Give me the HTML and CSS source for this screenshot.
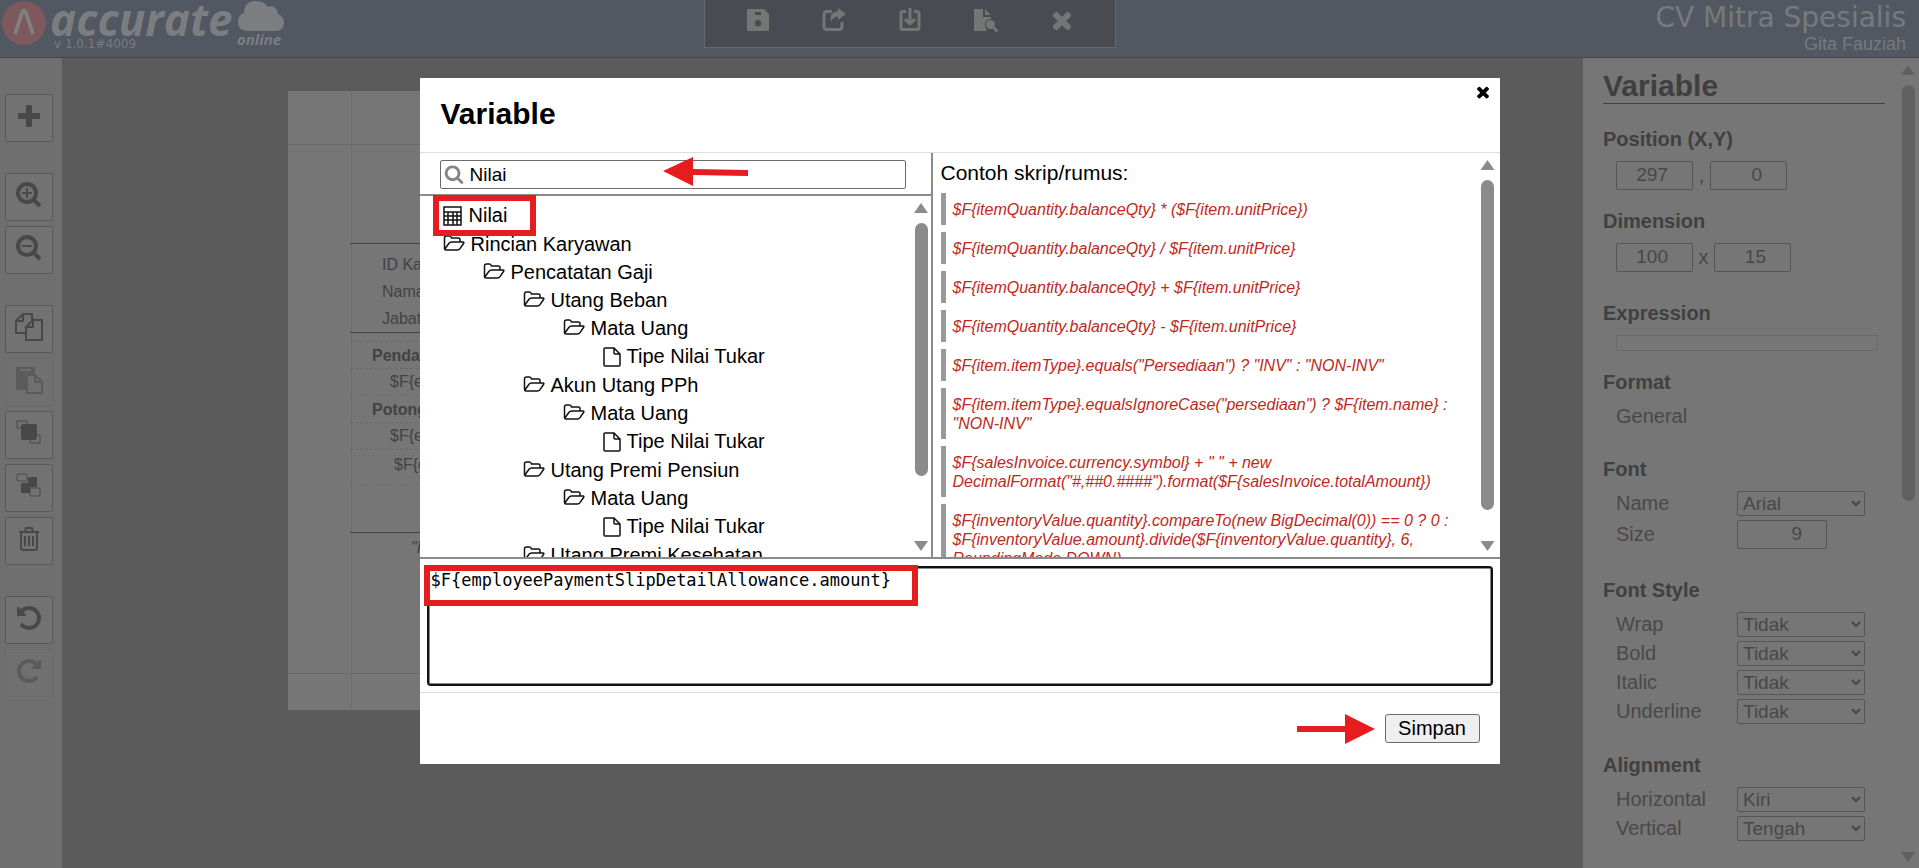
FILE: index.html
```html
<!DOCTYPE html>
<html lang="id">
<head>
    <meta charset="UTF-8">
    <meta name="viewport" content="width=device-width, initial-scale=1.0">
    <title>Variable - Accurate Online</title>
    <link rel="stylesheet" href="styles.css">
</head>
<body>
    <!-- Shared icons -->
    <svg class="icon-defs" aria-hidden="true">
        <symbol id="folder" viewBox="0 0 22 18">
            <path d="M1.500 14V3Q1.500 1 3.500 1H6.500Q8 1 8.500 3H15.500Q17 3 17 5V7M1.500 14.500L6 8.300Q7 7 8.500 7H20Q21.500 7 20.500 8.500L17 13.600Q16 15 14.500 15H3Q1.500 15 1.500 13.500"/>
        </symbol>
        <symbol id="file" viewBox="0 0 18 20">
            <path d="M11 1H2Q1 1 1 2V18Q1 19 2 19H16Q17 19 17 18V7ZM11 1V6Q11 7 12 7H17"/>
        </symbol>
        <symbol id="times" viewBox="0 0 1792 1792">
            <path d="M1490 1322q0 40-28 68l-136 136q-28 28-68 28t-68-28l-294-294-294 294q-28 28-68 28t-68-28l-136-136q-28-28-28-68t28-68l294-294-294-294q-28-28-28-68t28-68l136-136q28-28 68-28t68 28l294 294 294-294q28-28 68-28t68 28l136 136q28 28 28 68t-28 68l-294 294 294 294q28 28 28 68z"/>
        </symbol>
        <symbol id="undo" viewBox="0 0 1792 1792">
            <path d="M1664 896q0 156-61 298t-164 245-245 164-298 61q-172 0-327-72.500t-264-204.500q-7-10-6.500-22.500t8.500-20.500l137-138q10-9 25-9 16 2 23 12 73 95 179 147t225 52q104 0 198.500-40.500t163.500-109.500 109.500-163.500 40.500-198.500-40.500-198.500-109.500-163.500-163.500-109.500-198.500-40.500q-98 0-188 35.500t-160 101.500l137 138q31 30 14 69-17 40-59 40h-448q-26 0-45-19t-19-45v-448q0-42 40-59 39-17 69 14l130 129q107-101 244.500-156.500t284.500-55.500q156 0 298 61t245 164 164 245 61 298z"/>
        </symbol>
        <symbol id="search" viewBox="0 0 1792 1792">
            <path d="M1216 832q0-185-131.500-316.500t-316.500-131.500-316.500 131.500-131.500 316.500 131.500 316.500 316.500 131.500 316.500-131.500 131.500-316.500zm512 832q0 52-38 90t-90 38q-54 0-90-38l-343-342q-179 124-399 124-143 0-273.500-55.500t-225-150-150-225-55.500-273.500 55.500-273.500 150-225 225-150 273.500-55.500 273.500 55.500 225 150 150 225 55.500 273.500q0 220-124 399l343 343q37 37 37 90z"/>
        </symbol>
    </svg>

    <header class="topbar">
        <svg class="logo" width="290" height="57" viewBox="0 0 290 57" role="img" aria-label="Accurate Online">
            <circle class="logo-disc" cx="24" cy="23" r="22"/>
            <path class="logo-mark" d="M15 34L21 16Q24 5 27 16L33 34"/>
            <text class="logo-name" x="50" y="36">accurate</text>
            <path class="logo-cloud" d="M248 31Q238 31 238 22Q238 15 244 13Q244 1 256 1Q264 1 268 7Q276 4 278 14Q284 16 284 23Q284 31 275 31Z"/>
            <text class="logo-sub" x="237" y="45">online</text>
            <text class="logo-version" x="54" y="48">v 1.0.1#4009</text>
        </svg>

        <nav class="actions">
            <button type="button" aria-label="Simpan">
                <svg width="24" height="24" viewBox="0 0 24 24"><path fill-rule="evenodd" d="M1 1H18L23 6V23H1ZM9 4V7H15V4ZM12 12A3.200 3.200 0 1 0 12 18.400A3.200 3.200 0 1 0 12 12"/></svg>
            </button>
            <button type="button" aria-label="Bagikan">
                <svg width="24" height="24" viewBox="0 0 24 24"><path class="line" d="M10 3.500H5Q2 3.500 2 6.500V18.500Q2 21.500 5 21.500H17Q20 21.500 20 18.500V14"/><path d="M16 0L24 6L16 12V8.500Q11 8.500 9 14Q7 4 16 3.500Z"/></svg>
            </button>
            <button type="button" aria-label="Unduh">
                <svg width="24" height="24" viewBox="0 0 24 24"><path class="line" d="M8 3.500H5Q3 3.500 3 5.500V19.500Q3 21.500 5 21.500H19Q21 21.500 21 19.500V5.500Q21 3.500 19 3.500H16M12 0V15M7 11L12 16L17 11"/></svg>
            </button>
            <button type="button" aria-label="Pratinjau">
                <svg width="26" height="24" viewBox="0 0 26 24"><path d="M1 1H10V9H18V11Q12 11 12 17Q12 20 14 23H1ZM12 1L18 7H12Z"/><path class="line" d="M20.500 19.500L24.500 23.500"/><circle cx="17.500" cy="16.500" r="4.500"/></svg>
            </button>
            <button type="button" aria-label="Tutup">
                <svg width="28" height="28"><use href="#times"/></svg>
            </button>
        </nav>

        <div class="account">
            <div class="company">CV Mitra Spesialis</div>
            <div class="user">Gita Fauziah</div>
        </div>
    </header>

    <main class="workspace">
        <aside class="tools">
            <div class="tool-group">
                <button type="button" aria-label="Tambah">
                    <svg width="24" height="24" viewBox="0 0 24 24"><path d="M9 2Q9 1 10 1H14Q15 1 15 2V9H22Q23 9 23 10V14Q23 15 22 15H15V22Q15 23 14 23H10Q9 23 9 22V15H2Q1 15 1 14V10Q1 9 2 9H9Z"/></svg>
                </button>
            </div>
            <div class="tool-group">
                <button type="button" aria-label="Perbesar">
                    <svg width="28" height="28" viewBox="0 0 28 28"><circle class="line" cx="12" cy="12" r="9"/><path class="line" d="M19 19L25 25"/><path class="line thin" d="M7 12H17M12 7V17"/></svg>
                </button>
                <button type="button" aria-label="Perkecil">
                    <svg width="28" height="28" viewBox="0 0 28 28"><circle class="line" cx="12" cy="12" r="9"/><path class="line" d="M19 19L25 25"/><path class="line thin" d="M7 12H17"/></svg>
                </button>
            </div>
            <div class="tool-group">
                <button type="button" aria-label="Salin">
                    <svg width="28" height="28" viewBox="0 0 28 28"><path class="line thin" d="M11 20H1V8L8 1H17V7M8 1V8H1M17 7H27V27H11V14L18 7V14H11"/></svg>
                </button>
                <button type="button" aria-label="Tempel" disabled>
                    <svg width="28" height="28" viewBox="0 0 28 28"><path fill-rule="evenodd" d="M1 1H20V8H11V24H1ZM5 3V5H16V3Z"/><path class="line thin" d="M12 9H20L27 16V27H12ZM20 9V16H27"/></svg>
                </button>
                <button type="button" aria-label="Ke depan">
                    <svg width="28" height="28" viewBox="0 0 28 28"><path class="line hair" d="M6 9H2V2H12V5M22 16H25V24H15V21"/><rect x="6" y="5" width="16" height="16" rx="2"/></svg>
                </button>
                <button type="button" aria-label="Ke belakang">
                    <svg width="28" height="28" viewBox="0 0 28 28"><path d="M13 5H22V15H15V21H6V11H13Z"/><rect class="line hair" x="2" y="2" width="10" height="7" rx="1"/><rect class="line hair" x="15" y="16" width="10" height="8" rx="1"/></svg>
                </button>
                <button type="button" aria-label="Hapus">
                    <svg width="24" height="24" viewBox="0 0 24 24"><path class="line thin" d="M2 5H22M4 5V21Q4 23 6 23H18Q20 23 20 21V5M8 5L9 1H15L16 5M8 9V19M12 9V19M16 9V19"/></svg>
                </button>
            </div>
            <div class="tool-group">
                <button type="button" aria-label="Urungkan">
                    <svg width="28" height="28"><use href="#undo"/></svg>
                </button>
                <button type="button" aria-label="Ulangi" disabled>
                    <svg class="flip" width="28" height="28"><use href="#undo"/></svg>
                </button>
            </div>
        </aside>

        <section class="canvas">
            <div class="paper">
                <div class="paper-margin"></div>
                <div class="report">
                    <div class="band band-header"></div>
                    <div class="band band-info">
                        <p>ID Karyawan</p>
                        <p>Nama</p>
                        <p>Jabatan</p>
                    </div>
                    <div class="band band-gap"></div>
                    <div class="band band-title">Pendapatan</div>
                    <div class="band band-field">$F{employeePayment}</div>
                    <div class="band band-title">Potongan</div>
                    <div class="band band-field">$F{employeePayment}</div>
                    <div class="band band-total">$F{employeePayment}</div>
                    <div class="band band-space"></div>
                    <div class="band-note">"Pembayaran gaji"</div>
                </div>
                <div class="paper-margin paper-bottom"></div>
            </div>
        </section>

        <aside class="properties">
            <form class="fields">
                <h2>Variable</h2>

                <h3>Position (X,Y)</h3>
                <div class="pair">
                    <input type="text" value="297" aria-label="Position X">
                    <span class="comma">,</span>
                    <input type="text" value="0" aria-label="Position Y">
                </div>

                <h3 class="near">Dimension</h3>
                <div class="pair">
                    <input type="text" value="100" aria-label="Width">
                    <span class="cross">x</span>
                    <input type="text" value="15" aria-label="Height">
                </div>

                <h3>Expression</h3>
                <div class="expression"></div>

                <h3 class="near">Format</h3>
                <div class="format">General</div>

                <h3>Font</h3>
                <div class="row">
                    <label for="fontName">Name</label>
                    <select id="fontName"><option>Arial</option></select>
                </div>
                <div class="row">
                    <label for="fontSize">Size</label>
                    <input type="text" id="fontSize" value="9">
                </div>

                <h3>Font Style</h3>
                <div class="row">
                    <label for="wrap">Wrap</label>
                    <select id="wrap"><option>Tidak</option></select>
                </div>
                <div class="row">
                    <label for="bold">Bold</label>
                    <select id="bold"><option>Tidak</option></select>
                </div>
                <div class="row">
                    <label for="italic">Italic</label>
                    <select id="italic"><option>Tidak</option></select>
                </div>
                <div class="row">
                    <label for="underline">Underline</label>
                    <select id="underline"><option>Tidak</option></select>
                </div>

                <h3>Alignment</h3>
                <div class="row">
                    <label for="horizontal">Horizontal</label>
                    <select id="horizontal"><option>Kiri</option></select>
                </div>
                <div class="row">
                    <label for="vertical">Vertical</label>
                    <select id="vertical"><option>Tengah</option></select>
                </div>
            </form>
            <div class="scrollbar">
                <span class="arrow-up"></span>
                <div class="track"><div class="thumb thumb-panel"></div></div>
                <span class="arrow-down"></span>
            </div>
        </aside>
    </main>

    <div class="overlay">
        <div class="modal" role="dialog" aria-labelledby="modalTitle">
            <div class="modal-header">
                <h1 id="modalTitle">Variable</h1>
                <button type="button" class="close" aria-label="Tutup">
                    <svg width="18" height="18"><use href="#times"/></svg>
                </button>
            </div>

            <div class="modal-body">
                <div class="variables">
                    <div class="search">
                        <svg class="search-icon" width="20" height="20"><use href="#search"/></svg>
                        <input type="text" value="Nilai" aria-label="Cari variabel">
                    </div>
                    <div class="scroll-area">
                        <ul class="tree">
                            <li>
                                <div class="node leaf">
                                    <svg width="20" height="20" viewBox="0 0 20 20"><path d="M1 1H18V19H1ZM1 6H18M1 10H18M1 14H18M5 6V19M10 6V19M14 6V19"/></svg>
                                    Nilai
                                </div>
                            </li>
                            <li>
                                <div class="node"><svg width="22" height="18"><use href="#folder"/></svg>Rincian Karyawan</div>
                                <ul>
                                    <li>
                                        <div class="node"><svg width="22" height="18"><use href="#folder"/></svg>Pencatatan Gaji</div>
                                        <ul>
                                            <li>
                                                <div class="node"><svg width="22" height="18"><use href="#folder"/></svg>Utang Beban</div>
                                                <ul>
                                                    <li>
                                                        <div class="node"><svg width="22" height="18"><use href="#folder"/></svg>Mata Uang</div>
                                                        <ul>
                                                            <li><div class="node leaf"><svg width="18" height="20"><use href="#file"/></svg>Tipe Nilai Tukar</div></li>
                                                        </ul>
                                                    </li>
                                                </ul>
                                            </li>
                                            <li>
                                                <div class="node"><svg width="22" height="18"><use href="#folder"/></svg>Akun Utang PPh</div>
                                                <ul>
                                                    <li>
                                                        <div class="node"><svg width="22" height="18"><use href="#folder"/></svg>Mata Uang</div>
                                                        <ul>
                                                            <li><div class="node leaf"><svg width="18" height="20"><use href="#file"/></svg>Tipe Nilai Tukar</div></li>
                                                        </ul>
                                                    </li>
                                                </ul>
                                            </li>
                                            <li>
                                                <div class="node"><svg width="22" height="18"><use href="#folder"/></svg>Utang Premi Pensiun</div>
                                                <ul>
                                                    <li>
                                                        <div class="node"><svg width="22" height="18"><use href="#folder"/></svg>Mata Uang</div>
                                                        <ul>
                                                            <li><div class="node leaf"><svg width="18" height="20"><use href="#file"/></svg>Tipe Nilai Tukar</div></li>
                                                        </ul>
                                                    </li>
                                                </ul>
                                            </li>
                                            <li>
                                                <div class="node"><svg width="22" height="18"><use href="#folder"/></svg>Utang Premi Kesehatan</div>
                                            </li>
                                        </ul>
                                    </li>
                                </ul>
                            </li>
                        </ul>
                        <div class="scrollbar">
                            <span class="arrow-up"></span>
                            <div class="track"><div class="thumb thumb-tree"></div></div>
                            <span class="arrow-down"></span>
                        </div>
                    </div>
                </div>

                <div class="scroll-area examples">
                    <div class="example-list">
                        <p class="example-title">Contoh skrip/rumus:</p>
                        <blockquote>$F{itemQuantity.balanceQty} * ($F{item.unitPrice})</blockquote>
                        <blockquote>$F{itemQuantity.balanceQty} / $F{item.unitPrice}</blockquote>
                        <blockquote>$F{itemQuantity.balanceQty} + $F{item.unitPrice}</blockquote>
                        <blockquote>$F{itemQuantity.balanceQty} - $F{item.unitPrice}</blockquote>
                        <blockquote>$F{item.itemType}.equals("Persediaan") ? "INV" : "NON-INV"</blockquote>
                        <blockquote>$F{item.itemType}.equalsIgnoreCase("persediaan") ? $F{item.name} : "NON-INV"</blockquote>
                        <blockquote>$F{salesInvoice.currency.symbol} + " " + new DecimalFormat("#,##0.####").format($F{salesInvoice.totalAmount})</blockquote>
                        <blockquote>$F{inventoryValue.quantity}.compareTo(new BigDecimal(0)) == 0 ? 0 : $F{inventoryValue.amount}.divide($F{inventoryValue.quantity}, 6, RoundingMode.DOWN)</blockquote>
                    </div>
                    <div class="scrollbar">
                        <span class="arrow-up"></span>
                        <div class="track"><div class="thumb thumb-examples"></div></div>
                        <span class="arrow-down"></span>
                    </div>
                </div>
            </div>

            <div class="editor">
                <textarea aria-label="Rumus" spellcheck="false">$F{employeePaymentSlipDetailAllowance.amount}</textarea>
            </div>

            <div class="modal-footer">
                <button type="button" class="save">Simpan</button>
            </div>

            <!-- Step markers -->
            <div class="mark mark-node"></div>
            <div class="mark mark-formula"></div>
            <svg class="pointer pointer-search" width="86" height="30" viewBox="0 0 86 30"><path d="M0 14L30 0V12L85 13V19L30 18V29Z"/></svg>
            <svg class="pointer pointer-save" width="78" height="30" viewBox="0 0 78 30"><path d="M78 15L48 0V12H0V18H48V30Z"/></svg>
        </div>
    </div>
</body>
</html>
```
FILE: styles.css
```css
* {
    box-sizing: border-box;
}
body {
    display: flex;
    flex-direction: column;
    height: 100vh;
    margin: 0;
    overflow: hidden;
    font-family: Arial, "Liberation Sans", sans-serif;
    font-size: 20px;
    background-color: #5b5b5b;
}
h1, h2, h3, p, ul, blockquote {
    margin: 0;
    padding: 0;
}
button, input, select, textarea {
    font-family: inherit;
}
svg {
    display: block;
    flex: none;
}
.icon-defs {
    position: absolute;
    width: 0;
    height: 0;
}

/* Top bar */
.topbar {
    display: grid;
    grid-template-columns: 704fr 412px 790fr;
    flex: none;
    height: 58px;
    padding-right: 13px;
    background-color: #525861;
    border-bottom: 1px solid #43474d;
}
.logo {
    overflow: visible;
}
.logo-disc {
    fill: #7e585c;
}
.logo-mark {
    fill: none;
    stroke: #7f8080;
    stroke-width: 4;
}
.logo-name, .logo-sub, .logo-cloud {
    fill: #7b7d80;
}
.logo-name {
    font: italic 700 44px "Open Sans", sans-serif;
}
.logo-sub {
    font: italic 700 15px "Open Sans", sans-serif;
}
.logo-version {
    fill: #767c83;
    font: 12px "DejaVu Sans", sans-serif;
}
.actions {
    display: flex;
    justify-content: center;
    gap: 28px;
    height: 48px;
    padding-bottom: 8px;
    background-color: #484c52;
    border: 1px solid #65696e;
    border-top: 0;
}
.actions button {
    display: flex;
    align-items: center;
    justify-content: center;
    width: 48px;
    padding: 0;
    background: none;
    border: none;
    cursor: pointer;
}
.actions svg {
    fill: #747676;
    stroke: none;
}
.actions .line {
    fill: none;
    stroke: #747676;
    stroke-width: 3;
}
.account {
    text-align: right;
    color: #777a7d;
}
.company {
    padding-top: 2px;
    font-family: Verdana, "DejaVu Sans", sans-serif;
    font-size: 28px;
    line-height: 32px;
}
.user {
    font-size: 18px;
    line-height: 20px;
}

/* Workspace */
.workspace {
    display: flex;
    flex: 1;
    min-height: 0;
}
.tools {
    display: flex;
    flex-direction: column;
    gap: 31px;
    flex: none;
    width: 62px;
    padding: 36px 0 0 5px;
    background-color: #6f6f6f;
}
.tool-group {
    display: flex;
    flex-direction: column;
    gap: 5px;
}
.tool-group button {
    display: flex;
    align-items: center;
    justify-content: center;
    width: 48px;
    height: 48px;
    padding: 0 0 4px;
    background-color: #727272;
    border: 1px solid #595959;
    border-radius: 2px;
    cursor: pointer;
}
.tool-group button:disabled {
    border-color: #696969;
    opacity: 0.5;
}
.tools svg {
    fill: #484848;
    stroke: none;
}
.tools .line {
    fill: none;
    stroke: #484848;
    stroke-width: 4;
}
.tools .thin {
    stroke-width: 2;
}
.tools .hair {
    stroke-width: 1;
}
.flip {
    transform: scaleX(-1);
}
.canvas {
    flex: 1;
    padding: 33px 160px 0 226px;
}
.paper {
    color: #424242;
    font-size: 16px;
    background-color: #767676;
    background-image: linear-gradient(#6c6c6c, #6c6c6c);
    background-repeat: no-repeat;
    background-position: 63px 0;
    background-size: 1px 100%;
}
.paper-margin {
    height: 54px;
    border-bottom: 1px solid #6a6a6a;
}
.paper-bottom {
    height: 37px;
    border-top: 1px solid #6a6a6a;
    border-bottom: none;
}
.report {
    height: 528px;
    margin-left: 62px;
}
.band {
    border-bottom: 1px dashed #6a6a6a;
}
.band-header {
    height: 99px;
    border-bottom: 1px solid #444;
}
.band-info {
    height: 89px;
    padding: 7px 0 0 32px;
    line-height: 27px;
    border-bottom: 1px solid #444;
}
.band-gap {
    height: 9px;
}
.band-title {
    height: 27px;
    padding-left: 22px;
    font-weight: bold;
    line-height: 28px;
}
.band-field {
    height: 27px;
    padding-left: 40px;
    line-height: 26px;
}
.band-total {
    height: 35px;
    padding-left: 44px;
    line-height: 30px;
}
.band-space {
    height: 48px;
    border-bottom: 1px solid #444;
}
.band-note {
    padding-left: 61px;
    font-style: italic;
    line-height: 30px;
}

/* Properties panel */
.properties {
    display: flex;
    flex: none;
    width: 336px;
    overflow: hidden;
    color: #494949;
    background-color: #767676;
}
.fields {
    flex: 1;
    padding: 11px 13px 0 20px;
}
.fields h2 {
    font-size: 30px;
    line-height: 34px;
    color: #3f3f3f;
    border-bottom: 1px solid #404040;
}
.fields h3 {
    margin: 29px 0 10px;
    font-size: 20px;
    line-height: 24px;
    color: #404040;
}
.fields h2 + h3 {
    margin-top: 23px;
}
.fields h3.near {
    margin-top: 19px;
}
.fields input, .fields select {
    font-size: 19px;
    color: #484848;
    background-color: #767676;
    border: 1px solid #555;
    border-radius: 2px;
}
.fields input {
    width: 77px;
    height: 29px;
    padding: 0 24px 2px 0;
    text-align: right;
}
.fields select {
    width: 128px;
    height: 25px;
    padding: 0 1px;
}
.pair, .row {
    display: flex;
    margin-left: 13px;
}
.pair span {
    line-height: 29px;
    text-align: center;
}
.comma {
    width: 17px;
}
.cross {
    width: 21px;
}
.row {
    align-items: center;
}
.row + .row {
    margin-top: 4px;
}
.row label {
    width: 121px;
    padding-bottom: 2px;
    line-height: 22px;
}
.row input {
    width: 90px;
}
.expression {
    height: 16px;
    margin: 0 7px 0 13px;
    border: 1px solid #6a6a6a;
}
.format {
    margin-left: 13px;
    line-height: 24px;
}

/* Scrollbars */
.scrollbar {
    display: flex;
    flex-direction: column;
    align-items: center;
    flex: none;
    width: 19px;
    padding: 7px 0 6px;
}
.arrow-up, .arrow-down {
    width: 14px;
    height: 10px;
    background-color: #8b8b8b;
}
.arrow-up {
    clip-path: polygon(50% 0, 100% 100%, 0 100%);
}
.arrow-down {
    clip-path: polygon(0 0, 100% 0, 50% 100%);
}
.track {
    flex: 1;
    margin: 10px 0;
}
.thumb {
    width: 13px;
    background-color: #8b8b8b;
    border-radius: 7px;
}
.thumb-panel {
    height: 55%;
}
.thumb-tree {
    height: 82%;
}
.thumb-examples {
    height: 94%;
}
.properties .arrow-up, .properties .arrow-down, .properties .thumb {
    background-color: #606060;
}
.properties .scrollbar {
    width: 21px;
    padding-right: 1px;
}

/* Modal */
.overlay {
    position: fixed;
    inset: 0;
    display: flex;
    align-items: flex-start;
    justify-content: center;
    padding-top: 78px;
}
.modal {
    position: relative;
    width: 1080px;
    max-width: 100%;
    background-color: #fff;
}
.modal-header {
    display: flex;
    align-items: flex-start;
    justify-content: space-between;
    height: 75px;
    padding: 5px 8px 0 21px;
    border-bottom: 1px solid #ddd;
}
.modal-header h1 {
    padding-top: 14px;
    font-size: 30px;
    line-height: 34px;
}
.close {
    padding: 0;
    background: none;
    border: none;
    cursor: pointer;
}
.modal-body {
    display: grid;
    grid-template-columns: 513px 1fr;
    height: 406px;
    border-bottom: 2px solid #8b8b8b;
}
.variables {
    display: flex;
    flex-direction: column;
    min-height: 0;
    border-right: 2px solid #8b8b8b;
}
.search {
    position: relative;
    padding: 7px 25px 5px 20px;
    border-bottom: 2px solid #8b8b8b;
}
.search input {
    display: block;
    width: 100%;
    height: 29px;
    padding: 0 0 0 29px;
    font-size: 19px;
    border: 1px solid #6b6b6b;
    border-radius: 2px;
}
.search-icon {
    position: absolute;
    top: 11px;
    left: 24px;
    fill: #858585;
}
.scroll-area {
    display: flex;
    flex: 1;
    min-height: 0;
    overflow: hidden;
}
.tree {
    flex: 1;
    padding: 5px 0 0 23px;
}
.tree, .tree ul {
    list-style: none;
}
.tree ul {
    padding-left: 40px;
}
.node {
    display: flex;
    align-items: center;
    gap: 6px;
    height: 28px;
    white-space: nowrap;
}
.node svg {
    fill: none;
    stroke: #111;
    stroke-width: 1.5;
}
.leaf {
    height: 29px;
}
.example-list {
    flex: 1;
    padding: 7px 24px 0 8px;
}
.example-title {
    margin-bottom: 8px;
    font-size: 21px;
    line-height: 25px;
}
.example-list blockquote {
    margin-bottom: 7px;
    padding: 7px 0 6px 7px;
    font-size: 16px;
    font-style: italic;
    line-height: 19px;
    color: #c0281c;
    border-left: 5px solid #999;
}
.examples .scrollbar {
    width: 22px;
    padding-right: 2px;
}
.editor {
    padding: 9px 9px 8px;
    border-bottom: 1px solid #ddd;
}
.editor textarea {
    display: block;
    width: 100%;
    height: 116px;
    padding: 1px;
    font-family: Consolas, "DejaVu Sans Mono", monospace;
    font-size: 17px;
    line-height: 20px;
    border: 1px solid #8b8b8b;
    border-radius: 2px;
    outline: 2px solid #101010;
    resize: none;
}
.modal-footer {
    display: flex;
    justify-content: flex-end;
    padding: 21px 20px;
}
.save {
    width: 95px;
    height: 29px;
    padding: 0;
    font-size: 20px;
    background-color: #efefef;
    border: 1px solid #6b6b6b;
    border-radius: 3px;
    cursor: pointer;
}

/* Step markers */
.mark {
    position: absolute;
    height: 41px;
    border: 6px solid #e61c1f;
}
.mark-node {
    top: 117px;
    left: 13px;
    width: 103px;
}
.mark-formula {
    top: 487px;
    left: 4px;
    width: 494px;
}
.pointer {
    position: absolute;
    fill: #e61c1f;
}
.pointer-search {
    top: 79px;
    left: 243px;
}
.pointer-save {
    top: 636px;
    left: 877px;
}
```
